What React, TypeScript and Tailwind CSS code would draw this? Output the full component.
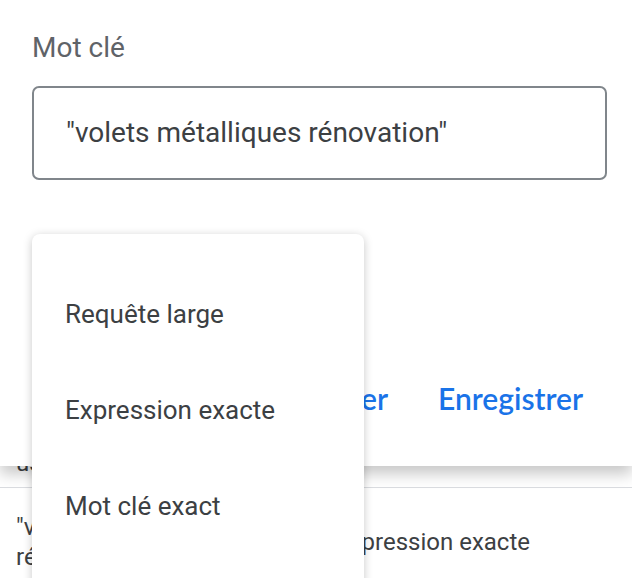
import React from 'react'

const matchTypes = ['Requête large', 'Expression exacte', 'Mot clé exact']

export default function App() {
  return (
    <div className="relative h-[578px] w-[632px] overflow-hidden bg-white font-['Roboto',sans-serif] text-[#3c4043]">
      {/* Page behind the dialog */}
      <div className="pt-[448px]">
        <div className="h-[39px] px-4 text-[24px] leading-[30px]">usage</div>
        <div className="flex border-t border-[#dadce0] pt-[24px] text-[24px] leading-[30px]">
          <div className="w-[336px] shrink-0 px-4">"volets métalliques<br />rénovation"</div>
          <div className="flex items-center">Expression exacte</div>
        </div>
      </div>

      {/* Dialog */}
      <div className="absolute inset-x-0 top-0 h-[466px] bg-white shadow-[0_8px_14px_rgba(0,0,0,0.22)]">
        <div className="px-8 pt-[30px]">
          <div className="text-[28px] leading-[36px] text-[#5f6368]">Mot clé</div>
          <div className="mt-[20px] flex h-[94px] w-[575px] items-center rounded-[7px] border-2 border-[#80868b] pl-[32px] text-[28px] text-[#3c4043]">
            "volets métalliques rénovation"
          </div>
        </div>
        <div className="mt-[200px] flex justify-end gap-[50px] pr-[49px] font-['Lato',sans-serif] text-[30px] font-semibold leading-[36px] text-[#1a73e8]">
          <button>Annuler</button>
          <button>Enregistrer</button>
        </div>
      </div>

      {/* Match type menu */}
      <div className="absolute left-8 top-[234px] w-[332px] rounded-t-[8px] bg-white pt-[32px] shadow-[0_2px_10px_rgba(0,0,0,0.22)]">
        {matchTypes.map((t) => (
          <div key={t} className="flex h-[96px] items-center pl-[33px] text-[26px] leading-[32px] text-[#3c4043]">
            {t}
          </div>
        ))}
        <div className="h-[40px]" />
      </div>
    </div>
  )
}
